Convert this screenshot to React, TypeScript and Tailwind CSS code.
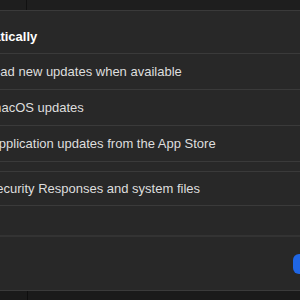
import React from "react";

const rows = [
  { label: "Download new updates when available", shift: "-ml-[43px]" },
  { label: "Install macOS updates", shift: "-ml-[47px]" },
  { label: "Install application updates from the App Store", shift: "-ml-[46px]" },
];

const App: React.FC = () => {
  return (
    <div className="w-[300px] h-[300px] overflow-hidden bg-[#1e1e1e] font-['Liberation_Sans',Arial,sans-serif] text-[13px] text-[#dedede]">
      <div className="flex h-[10px]">
        <div className="w-[27px] border-r border-[#111111]" />
      </div>
      <div className="flex flex-col h-[281px] bg-[#282828] border-y border-[#3a3a3a]">
        <div className="h-[43px] shrink-0 border-b border-[#3a3a3a] overflow-hidden flex items-end pb-[8px]">
          <span className="-ml-[48px] whitespace-nowrap font-bold text-white leading-4">
            Automatically
          </span>
        </div>
        {rows.map((row) => (
          <div
            key={row.label}
            className="h-[36px] shrink-0 border-b border-[#3a3a3a] overflow-hidden flex items-center"
          >
            <span className={`${row.shift} whitespace-nowrap leading-4`}>{row.label}</span>
          </div>
        ))}
        <div className="h-[9px] shrink-0" />
        <div className="h-[35px] shrink-0 border-y border-[#3a3a3a] overflow-hidden flex items-center">
          <span className="-ml-[50px] whitespace-nowrap leading-4">
            Install Security Responses and system files
          </span>
        </div>
        <div className="h-[29px] shrink-0" />
        <div className="flex-1 border-t-2 border-[#333333] flex items-center justify-end">
          <button className="-mr-[60px] h-[20px] w-[67px] rounded-md bg-[#1f66e5] text-white text-[13px]">
            Done
          </button>
        </div>
      </div>
      <div className="flex h-[9px] bg-[#1a1a1a]">
        <div className="w-[28px] border-r border-[#0e0e0e]" />
      </div>
    </div>
  );
};

export default App;
